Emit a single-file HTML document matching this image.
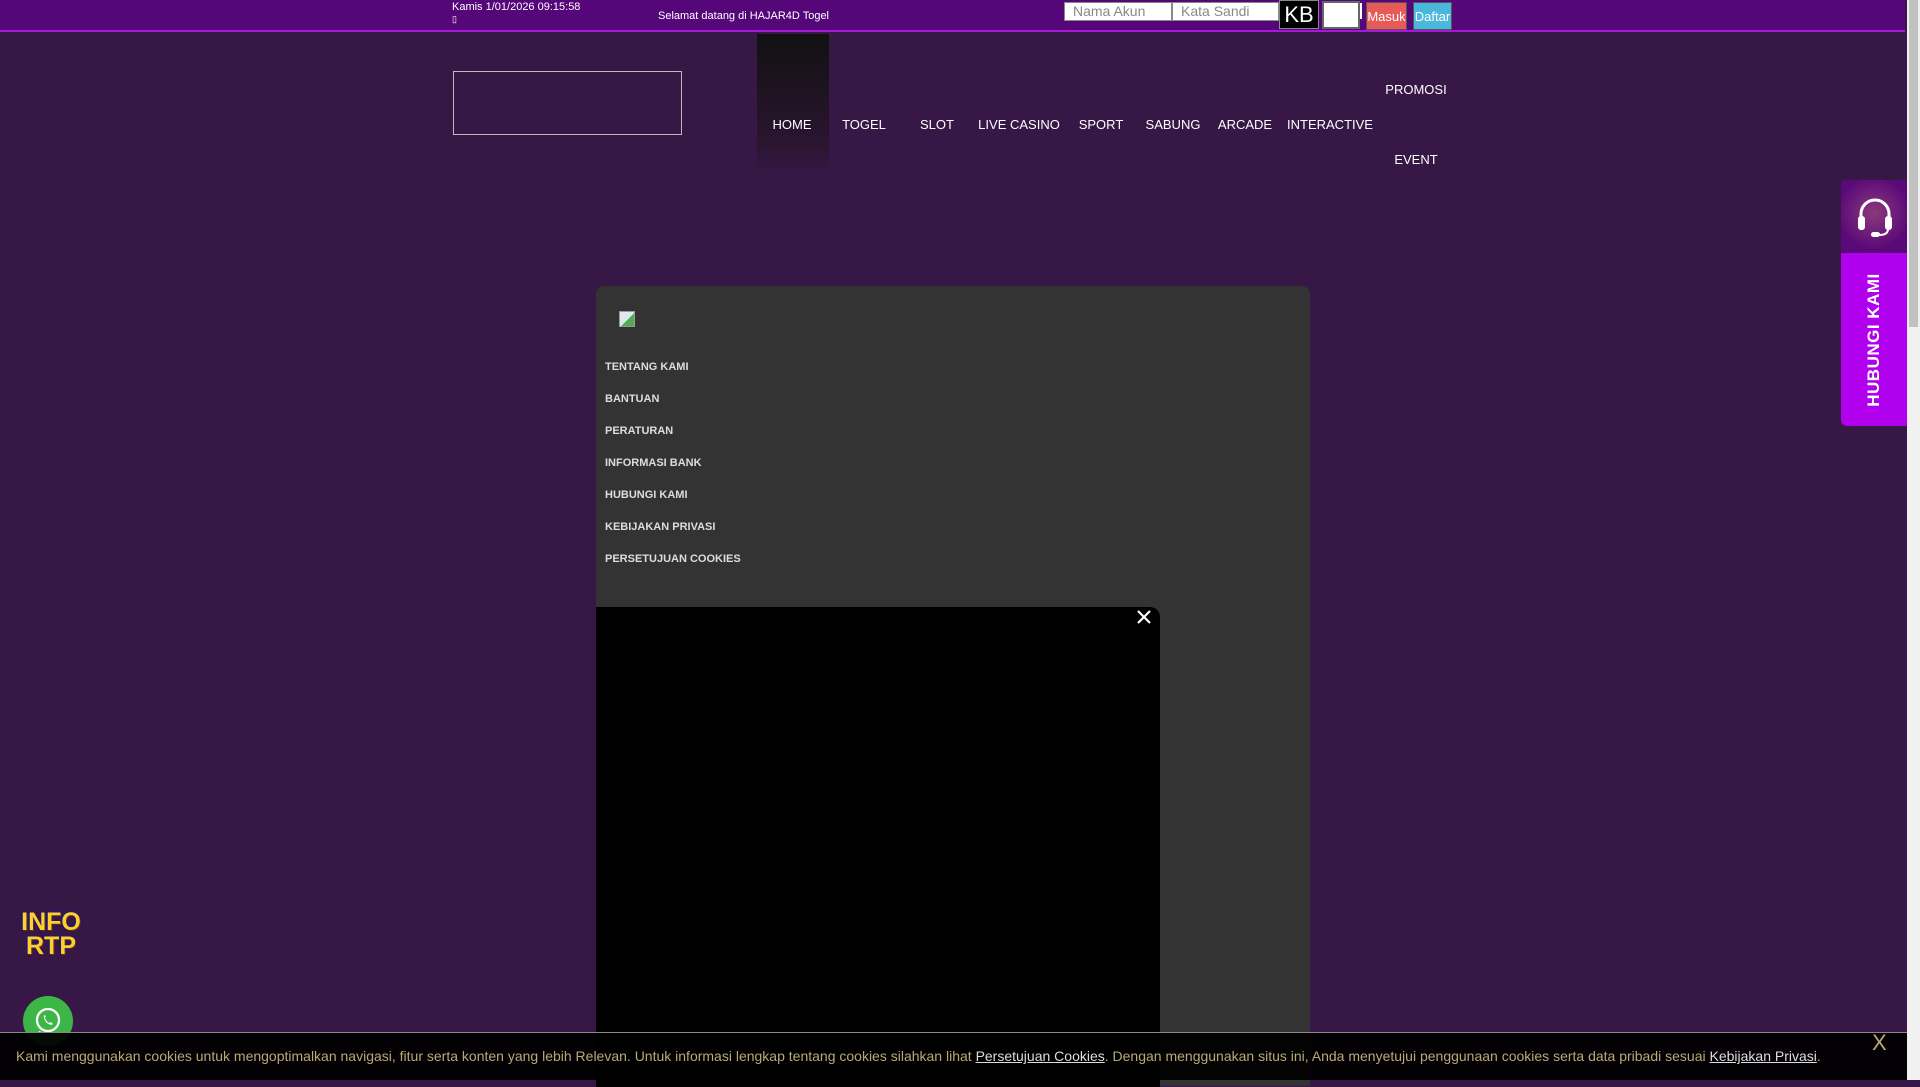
<!DOCTYPE html>
<html><head><meta charset="utf-8"><style>
*{margin:0;padding:0;box-sizing:border-box}
html,body{width:1920px;height:1080px;overflow:hidden;background:#371745;font-family:"Liberation Sans",sans-serif}
.abs{position:absolute}
#top{left:0;top:0;width:1905px;height:32px;background:#55077a;border-bottom:2px solid #a818d8}
.t{color:#fff;font-size:11px;white-space:nowrap}
.inp{background:#fff;border:1px solid #888;color:#888;font-size:14px;padding-left:8px;line-height:16px}
.nav{color:#fff;font-size:13px;top:117px;transform:translateX(-50%);white-space:nowrap}
.menu{left:605px;color:#ddd;font-size:11px;font-weight:bold;white-space:nowrap}
</style></head><body>
<div id="top" class="abs"></div>
<div class="abs t" style="left:452px;top:1px">Kamis 1/01/2026 09:15:58</div>
<div class="abs t" style="left:452px;top:14px;font-size:9px">▯</div>
<div class="abs t" style="left:658px;top:10px">Selamat datang di HAJAR4D Togel</div>
<div class="abs inp" style="left:1064px;top:2px;width:108px;height:19px">Nama Akun</div>
<div class="abs inp" style="left:1172px;top:2px;width:107px;height:19px">Kata Sandi</div>
<div class="abs" style="left:1279px;top:0;width:40px;height:29px;background:#000;border:1px solid #888;color:#fff;font-size:22px;text-align:center;line-height:27px">KB</div>
<div class="abs" style="left:1322px;top:1px;width:38px;height:28px;background:#fff;border:2px solid #666"></div>
<div class="abs" style="left:1360px;top:3px;width:2px;height:16px;background:#fff"></div>
<div class="abs" style="left:1366px;top:2px;width:41px;height:28px;background:#e85a58;border:1px solid #555;color:#fff;font-size:13px;line-height:28px;text-align:center">Masuk</div>
<div class="abs" style="left:1413px;top:2px;width:39px;height:28px;background:#4ab8dc;border:1px solid #555;color:#fff;font-size:13px;line-height:28px;text-align:center">Daftar</div>

<div class="abs" style="left:453px;top:71px;width:229px;height:64px;border:1px solid #bbb"></div>
<div class="abs" style="left:757px;top:34px;width:72px;height:138px;background:linear-gradient(#111,#2a1530 80%,#371745)"></div>
<div class="abs nav" style="left:792px">HOME</div>
<div class="abs nav" style="left:864px">TOGEL</div>
<div class="abs nav" style="left:937px">SLOT</div>
<div class="abs nav" style="left:1019px">LIVE CASINO</div>
<div class="abs nav" style="left:1101px">SPORT</div>
<div class="abs nav" style="left:1173px">SABUNG</div>
<div class="abs nav" style="left:1245px">ARCADE</div>
<div class="abs nav" style="left:1330px">INTERACTIVE</div>
<div class="abs nav" style="left:1416px;top:82px">PROMOSI</div>
<div class="abs nav" style="left:1416px;top:152px">EVENT</div>

<div class="abs" style="left:596px;top:286px;width:714px;height:800px;background:#333;border-radius:8px 8px 0 0"></div>
<div class="abs" style="left:619px;top:311px;width:16px;height:16px;background:linear-gradient(135deg,#dfe8f0 55%,#5a5 55%);border:1px solid #999"></div>
<div class="abs menu" style="top:361px">TENTANG KAMI</div>
<div class="abs menu" style="top:393px">BANTUAN</div>
<div class="abs menu" style="top:425px">PERATURAN</div>
<div class="abs menu" style="top:457px">INFORMASI BANK</div>
<div class="abs menu" style="top:489px">HUBUNGI KAMI</div>
<div class="abs menu" style="top:521px">KEBIJAKAN PRIVASI</div>
<div class="abs menu" style="top:553px">PERSETUJUAN COOKIES</div>
<div class="abs" style="left:596px;top:607px;width:564px;height:480px;background:#000;border-radius:0 10px 0 0"></div>
<svg class="abs" style="left:1137px;top:610px" width="14" height="14"><path d="M1 1L13 13M13 1L1 13" stroke="#fff" stroke-width="2.2"/></svg>

<div class="abs" style="left:1841px;top:180px;width:66px;height:246px;background:#b000ee;border-radius:6px 0 0 6px;overflow:hidden">
 <div style="height:73px;background:radial-gradient(circle at 50% 45%,#8a3a7a,#5a0a78 70%)"></div>
 <div style="position:absolute;left:33px;top:160px;transform:translate(-50%,-50%) rotate(-90deg);color:#fff;font-weight:bold;font-size:17px;white-space:nowrap;letter-spacing:.5px">HUBUNGI KAMI</div>
</div>
<svg class="abs" style="left:1855px;top:194px" width="40" height="46"><path d="M6 26V20A14 14 0 0 1 34 20V26" fill="none" stroke="#fff" stroke-width="3"/><rect x="3" y="22" width="7" height="14" rx="3" fill="#fff"/><rect x="30" y="22" width="7" height="14" rx="3" fill="#fff"/><path d="M33 35Q33 41 24 41" fill="none" stroke="#fff" stroke-width="2"/><rect x="16" y="38" width="9" height="5" rx="2.5" fill="#fff"/></svg>

<div class="abs" style="left:1907px;top:0;width:13px;height:1080px;background:#f1f1f1"></div>
<div class="abs" style="left:1909px;top:0;width:9px;height:327px;background:#c1c1c1"></div>

<div class="abs" style="left:16px;top:910px;width:70px;color:#ffcf2a;font-weight:900;font-size:25px;line-height:24px;text-align:center;text-shadow:0 0 2px #1a1a80,1px 1px 0 #7a3a00,-1px -1px 0 #1a1a80">INFO<br>RTP</div>
<div class="abs" style="left:23px;top:996px;width:50px;height:50px;border-radius:50%;background:#3cb646"></div>
<svg class="abs" style="left:33px;top:1006px" width="30" height="30"><circle cx="15" cy="14" r="11" fill="none" stroke="#fff" stroke-width="2.3"/><path d="M6 25L4 28L9 26Z" fill="#fff"/><path d="M11 9Q10 13 14 17Q18 20 20 18L18 16L16 17Q13 15 12 12L13 10Z" fill="#fff"/></svg>

<div class="abs" style="left:0;top:1032px;width:1907px;height:48px;background:rgba(0,0,0,.94);border-top:1px solid #888"></div>
<div class="abs" style="left:16px;top:1048px;color:#b9a978;font-size:14px;white-space:nowrap">Kami menggunakan cookies untuk mengoptimalkan navigasi, fitur serta konten yang lebih Relevan. Untuk informasi lengkap tentang cookies silahkan lihat <u style="color:#ddd">Persetujuan Cookies</u>. Dengan menggunakan situs ini, Anda menyetujui penggunaan cookies serta data pribadi sesuai <u style="color:#ddd">Kebijakan Privasi</u>.</div>
<div class="abs" style="left:1872px;top:1030px;color:#b9a978;font-size:22px">X</div>
</body></html>
